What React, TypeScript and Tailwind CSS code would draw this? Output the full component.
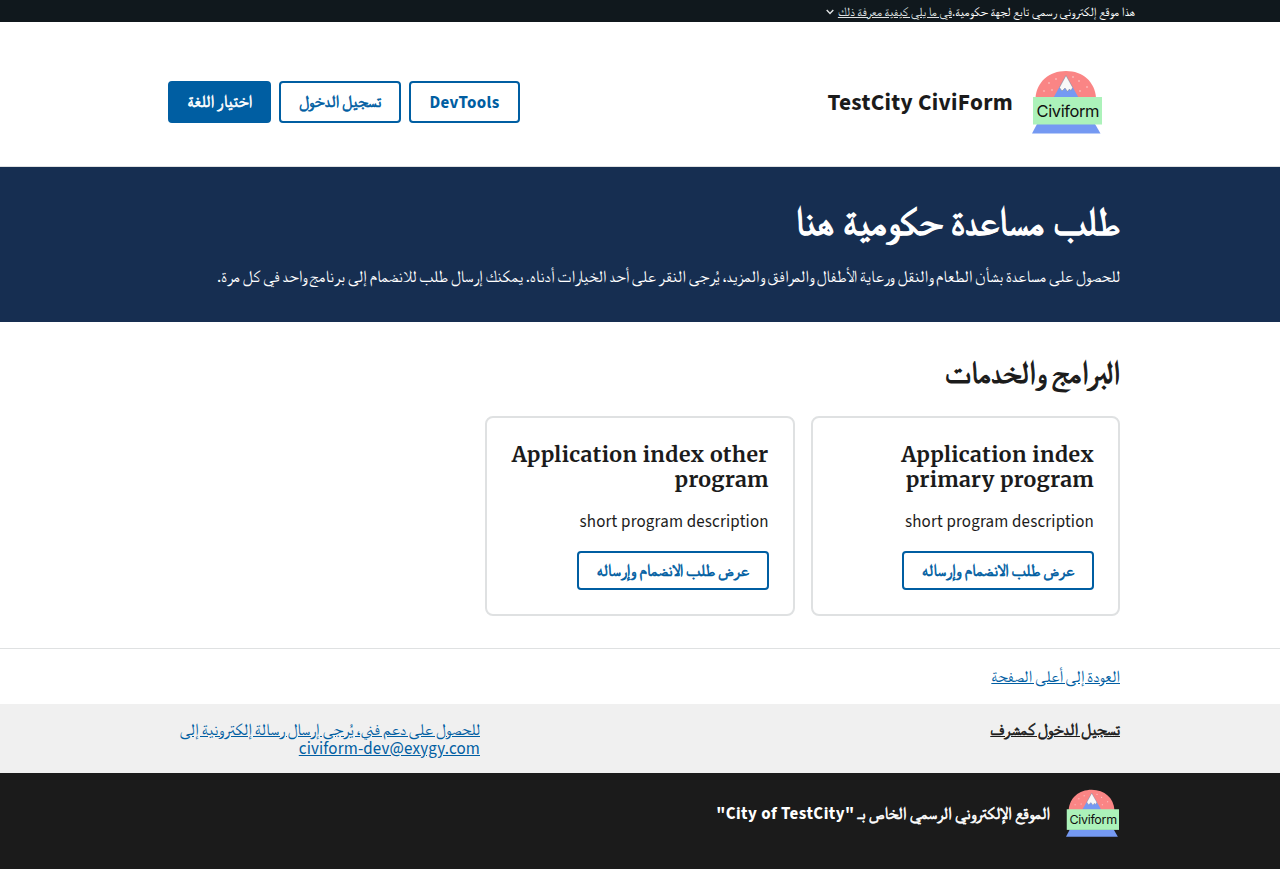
import type { ReactNode } from 'react';

const sans = "font-['Source_Sans_3','FreeSerif',serif]";
const boldArabic = '[-webkit-text-stroke:0.6px_currentColor] [word-spacing:-0.5px]';

function Logo({ className }: { className: string }) {
  const dots = [[29, 23], [36, 19], [24, 31], [32, 30], [59, 21], [67, 27], [60, 31], [53, 17]];
  return (
    <svg viewBox="12 10 70 64" preserveAspectRatio="none" className={className}>
      <path d="M15.500 38C16.500 22 29 11 46 11S75 22 76 38Z" fill="#fa8585" />
      {dots.map(([x, y]) => <circle key={`${x}-${y}`} cx={x} cy={y} r="0.8" fill="#fbd5d5" />)}
      <path d="M33.500 37.500L46 15.500L58.500 37.500Z" fill="#7599f2" />
      <path d="M46 15.500L39.500 27.500L42 31L45 28L47.500 31.500L49.500 29L51 30.500L52.700 27.500Z" fill="#f8f8f8" stroke="#777" strokeWidth="0.4" />
      <path d="M17 64H75L80.500 73.500H12Z" fill="#7599f2" />
      <rect x="13" y="37" width="69" height="27.500" fill="#acf2ba" />
      <text x="16.500" y="57.300" fontFamily="Inter, sans-serif" fontSize="16.5" textLength="63" direction="ltr" fill="#111">Civiform</text>
    </svg>
  );
}

function Button({ children, className }: { children: ReactNode; className: string }) {
  return (
    <button className={`flex items-center justify-center rounded-[4px] border-2 border-[#005ea2] pt-0.5 whitespace-nowrap ${className}`}>
      {children}
    </button>
  );
}

function Card({ title }: { title: [string, string] }) {
  return (
    <article className="h-[200px] rounded-lg border-2 border-[#dfe1e2] px-6 pt-6">
      <h3 className="font-['Merriweather',serif] text-[21.300px] leading-[25px] font-bold whitespace-nowrap">
        <span className="block tracking-[0.42px]">{title[0]}</span>
        <span className="block tracking-[0.27px]">{title[1]}</span>
      </h3>
      <p className="mt-[17px] leading-[27px] tracking-[0.17px]">short program description</p>
      <Button className={`mt-[15px] h-[39px] w-48 text-[#005ea2] ${boldArabic}`}>عرض طلب الانضمام وإرساله</Button>
    </article>
  );
}

export default function App() {
  return (
    <div dir="rtl" lang="ar" className={`min-h-[869px] bg-white text-[16.960px] text-[#1b1b1b] ${sans}`}>
      <div className="flex h-[22px] items-center bg-[#10181d] pt-0.5 pr-[145px] text-[12.880px] leading-5 text-white">
        <span>هذا موقع إلكتروني رسمي تابع لجهة حكومية.</span>
        <a className="text-[#dfe1e2] underline">في ما يلي كيفية معرفة ذلك</a>
        <svg viewBox="0 0 8 6" className="mr-1 h-1.5 w-2"><path d="M.7 1L4 4.500L7.300 1" fill="none" stroke="#dfe1e2" strokeWidth="1.400" /></svg>
      </div>
      <header className="flex h-[145px] items-center justify-between border-b border-[#dfe1e2] pt-4 pr-[178px] pl-[168px]">
        <div className="flex items-center gap-[19px]">
          <Logo className="h-[64px] w-[70px]" />
          <span className="pt-0.5 text-[23.320px] font-bold tracking-[0.3px]">TestCity CiviForm</span>
        </div>
        <nav className="flex gap-2">
          <Button className="h-[42px] w-[111px] pt-1 font-bold tracking-[0.35px] text-[#005ea2]">DevTools</Button>
          <Button className={`h-[42px] w-[122px] text-[#005ea2] ${boldArabic}`}>تسجيل الدخول</Button>
          <Button className={`h-[42px] w-[103px] bg-[#005ea2] text-white ${boldArabic}`}>اختيار اللغة</Button>
        </nav>
      </header>
      <section className="h-[155px] bg-[#162e51] px-40 pt-[30px] text-white">
        <h1 className="font-['Merriweather','FreeSerif',serif] text-[39.100px] leading-[50px] whitespace-nowrap [-webkit-text-stroke:1.4px_currentColor]">طلب مساعدة حكومية هنا</h1>
        <p className="mt-[17px] leading-[27px] whitespace-nowrap [word-spacing:-0.66px]">للحصول على مساعدة بشأن الطعام والنقل ورعاية الأطفال والمرافق والمزيد، يُرجى النقر على أحد الخيارات أدناه. يمكنك إرسال طلب للانضمام إلى برنامج واحد في كل مرة.</p>
      </section>
      <main className="h-[326px] px-40 pt-[31px]">
        <h2 className="font-['Merriweather','FreeSerif',serif] text-[31.200px] leading-[38px] whitespace-nowrap [-webkit-text-stroke:1.1px_currentColor]">البرامج والخدمات</h2>
        <div className="mt-[25px] grid grid-cols-3 gap-4">
          <Card title={['Application index', 'primary program']} />
          <Card title={['Application index other', 'program']} />
        </div>
      </main>
      <div className="flex h-14 items-center border-t border-[#dfe1e2] px-40 pt-0.5 text-[#005ea2]"><a className="underline [word-spacing:-0.4px]">العودة إلى أعلى الصفحة</a></div>
      <div className="flex h-[69px] justify-between bg-[#f0f0f0] pt-[17px] pr-40 pl-40 leading-[18px]">
        <a className={`underline ${boldArabic}`}>تسجيل الدخول كمشرف</a>
        <a className="w-80 text-[#005ea2]">
          <span className="block whitespace-nowrap underline [word-spacing:-0.4px]">للحصول على دعم فني، يُرجى إرسال رسالة إلكترونية إلى</span>
          <span className="mt-px block tracking-[0.16px] underline">civiform-dev@exygy.com</span>
        </a>
      </div>
      <footer className="flex h-24 items-center gap-4 bg-[#1b1b1b] pr-[161px] pb-4 text-white">
        <Logo className="h-[48px] w-[53px]" />
        <span className="pt-[3px] [-webkit-text-stroke:0.6px_currentColor]">الموقع الإلكتروني الرسمي الخاص بـ <span className="font-bold tracking-[0.45px] [-webkit-text-stroke:0]">"City of TestCity"</span></span>
      </footer>
    </div>
  );
}
